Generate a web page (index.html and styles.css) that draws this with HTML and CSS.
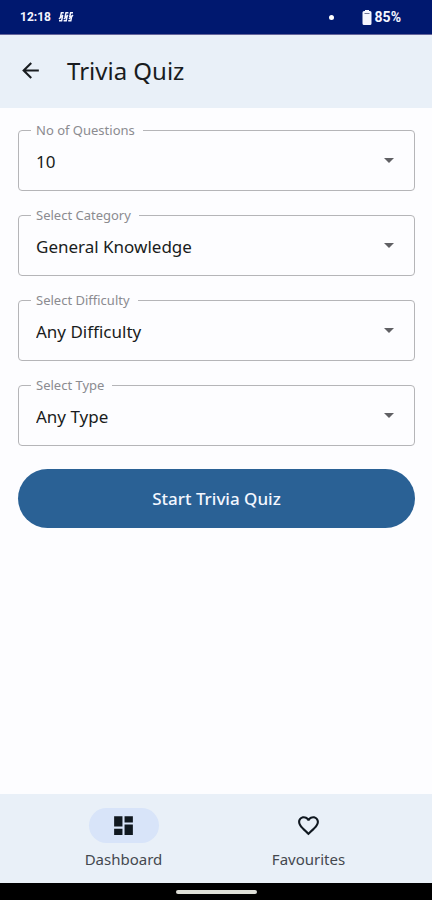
FILE: index.html
```html
<!DOCTYPE html>
<html lang="en">
<head>
  <meta charset="utf-8">
  <meta name="viewport" content="width=device-width, initial-scale=1">
  <title>Trivia Quiz</title>
  <link rel="stylesheet" href="styles.css">
</head>
<body>
  <div class="status-bar">
    <span class="status-time">12:18</span>
    <svg class="status-activity" viewBox="0 0 16 12" aria-hidden="true">
      <g fill="none" stroke="currentColor" stroke-width="1.5">
        <path d="M5.8 1.800H3.400L2.600 5.500H4.400L3.600 9.800H1"/>
        <path d="M10.400 1.800H8L7.200 5.500H9L8.200 9.800H5.600"/>
        <path d="M15 1.800H12.600L11.800 5.500H13.600L12.800 9.800H10.200"/>
        <path d="M1 8L5 4M6 8L10 4M11 8L15 4"/>
      </g>
    </svg>
    <span class="status-dot"></span>
    <svg class="status-battery" viewBox="0 0 10 15" aria-hidden="true">
      <path fill="currentColor" d="M3 0h4v1h1a1.500 1.500 0 0 1 1.500 1.500v11a1.500 1.500 0 0 1-1.500 1.500H2a1.500 1.500 0 0 1-1.500-1.500v-11A1.500 1.500 0 0 1 2 1h1z"/>
      <path stroke="#6f7698" d="M2.500 3.500h5"/>
    </svg>
    <span class="status-percent">85%</span>
  </div>

  <header class="app-bar">
    <button class="back" type="button" aria-label="Back">
      <svg viewBox="0 0 24 24" aria-hidden="true"><path fill="currentColor" d="M20 11H7.830l5.590-5.590L12 4l-8 8 8 8 1.410-1.410L7.830 13H20v-2z"/></svg>
    </button>
    <h1 class="title">Trivia Quiz</h1>
  </header>

  <main class="content">
    <form class="quiz-form">
      <fieldset class="field">
        <legend class="field-legend"><label for="count">No of Questions</label></legend>
        <select class="field-select" id="count"><option>10</option></select>
      </fieldset>
      <fieldset class="field">
        <legend class="field-legend"><label for="category">Select Category</label></legend>
        <select class="field-select" id="category"><option>General Knowledge</option></select>
      </fieldset>
      <fieldset class="field">
        <legend class="field-legend"><label for="difficulty">Select Difficulty</label></legend>
        <select class="field-select" id="difficulty"><option>Any Difficulty</option></select>
      </fieldset>
      <fieldset class="field">
        <legend class="field-legend"><label for="type">Select Type</label></legend>
        <select class="field-select" id="type"><option>Any Type</option></select>
      </fieldset>
      <button class="start" type="button">Start Trivia Quiz</button>
    </form>
  </main>

  <nav class="bottom-nav">
    <a class="nav-item" href="#dashboard" aria-current="page">
      <span class="nav-icon nav-icon-active">
        <svg viewBox="0 0 24 24" aria-hidden="true"><path fill="currentColor" d="M3 13h8V3H3v10zm0 8h8v-6H3v6zm10 0h8V11h-8v10zm0-18v6h8V3h-8z"/></svg>
      </span>
      <span>Dashboard</span>
    </a>
    <a class="nav-item" href="#favourites">
      <span class="nav-icon">
        <svg viewBox="0 0 24 24" aria-hidden="true"><path fill="currentColor" d="M16.500 3c-1.740 0-3.410.810-4.500 2.090C10.910 3.810 9.240 3 7.500 3 4.420 3 2 5.420 2 8.500c0 3.780 3.400 6.860 8.550 11.540L12 21.350l1.450-1.320C18.600 15.360 22 12.280 22 8.500 22 5.420 19.580 3 16.500 3zm-4.400 15.550l-.1.1-.1-.1C7.140 14.240 4 11.390 4 8.500 4 6.500 5.500 5 7.500 5c1.540 0 3.040.990 3.570 2.360h1.870C13.460 5.990 14.960 5 16.500 5c2 0 3.500 1.500 3.500 3.500 0 2.890-3.140 5.740-7.900 10.050z"/></svg>
      </span>
      <span>Favourites</span>
    </a>
  </nav>
  <div class="gesture-bar"><span class="gesture-handle"></span></div>
</body>
</html>
```
FILE: styles.css
```css
* {
  box-sizing: border-box;
}

body {
  display: flex;
  flex-direction: column;
  min-height: 100vh;
  margin: 0;
  background: #fdfdff;
  color: #191c20;
  font-family: "Noto Sans", "Open Sans", sans-serif;
}

svg {
  display: block;
}

.status-bar {
  display: flex;
  align-items: center;
  height: 35px;
  padding: 0 31px 0 20px;
  border-bottom: 1px solid #65659b;
  background: #00186f;
  color: #f4f5ff;
  font: bold 14px/20px Roboto, sans-serif;
}

.status-time {
  font-size: 12px;
}

.status-activity {
  width: 16px;
  height: 12px;
  margin-left: 7px;
}

.status-dot {
  width: 5px;
  height: 5px;
  margin-left: auto;
  border-radius: 50%;
  background: #fff;
}

.status-battery {
  width: 10px;
  height: 15px;
  margin: 0 3px 0 28px;
}

.app-bar {
  display: flex;
  align-items: center;
  gap: 24px;
  height: 73px;
  padding: 0 18px 2px;
  background: #e9f0f8;
}

.back {
  padding: 0;
  border: 0;
  background: none;
  color: inherit;
}

.back svg {
  width: 25px;
  height: 25px;
}

.title {
  margin: 0;
  font-size: 24px;
  font-weight: 400;
  line-height: 32px;
}

.content {
  flex: 1;
  padding: 13px 17px 24px 18px;
}

.quiz-form {
  display: grid;
  gap: 15px;
}

.field {
  min-width: 0;
  margin: 0;
  padding: 0;
  border: 1px solid #b5b5b8;
  border-radius: 4px;
}

.field-legend {
  margin-left: 12px;
  padding: 1px 8px 0 5px;
  color: #8b8b90;
  font-size: 13px;
  line-height: 17px;
}

.field-select {
  display: block;
  width: 100%;
  height: 51px;
  padding: 0 17px 6px;
  border: 0;
  appearance: none;
  background: url("data:image/svg+xml,%3Csvg xmlns='http://www.w3.org/2000/svg' viewBox='0 0 10 5'%3E%3Cpath fill='%23606064' d='M0 0h10L5 5z'/%3E%3C/svg%3E") right 20px top 19px / 10px 5px no-repeat;
  color: #191c20;
  font: 17px/24px "Noto Sans", "Open Sans", sans-serif;
}

.start {
  height: 59px;
  margin-top: 8px;
  border: 0;
  border-radius: 30px;
  background: #2a6195;
  color: #f3f7ff;
  font: 500 17px/24px "Noto Sans", "Open Sans", sans-serif;
}

.bottom-nav {
  display: grid;
  grid-template-columns: 1fr 1fr;
  height: 89px;
  padding: 14px 31px 0;
  background: #e9f0f8;
}

.nav-item {
  display: flex;
  flex-direction: column;
  align-items: center;
  gap: 6px;
  color: #44484f;
  font-size: 15px;
  line-height: 20px;
  text-decoration: none;
}

.nav-icon {
  display: grid;
  place-items: center;
  width: 70px;
  height: 35px;
  border-radius: 18px;
  color: #101820;
}

.nav-icon-active {
  background: #d8e4f9;
}

.nav-icon svg {
  width: 25px;
  height: 25px;
}

.gesture-bar {
  display: grid;
  place-items: center;
  height: 17px;
  background: #000;
}

.gesture-handle {
  width: 81px;
  height: 4px;
  border-radius: 2px;
  background: #dedfd8;
}
```
